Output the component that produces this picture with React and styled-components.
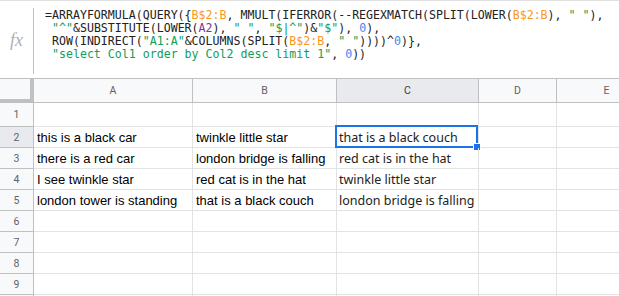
import React from 'react'
import styled, { createGlobalStyle } from 'styled-components'

const columns = [
    { key: 'A', width: 159 },
    { key: 'B', width: 144 },
    { key: 'C', width: 142 },
    { key: 'D', width: 78 },
    { key: 'E', width: 100 },
]

const rows = [
    { n: 1, height: 24, cells: ['', '', ''] },
    { n: 2, cells: ['this is a black car', 'twinkle little star', 'that is a black couch'] },
    { n: 3, cells: ['there is a red car', 'london bridge is falling', 'red cat is in the hat'] },
    { n: 4, cells: ['I see twinkle star', 'red cat is in the hat', 'twinkle little star'] },
    { n: 5, cells: ['london tower is standing', 'that is a black couch', 'london bridge is falling'] },
    { n: 6, cells: [] },
    { n: 7, cells: [] },
    { n: 8, cells: [] },
    { n: 9, cells: [] },
    { n: null, cells: [] },
]

const formula = [
    [['=ARRAYFORMULA(QUERY({'], ['B$2:B', 'ref'], [', MMULT(IFERROR(--REGEXMATCH(SPLIT(LOWER('], ['B$2:B', 'ref'], ['), '], ['" "', 'str'], ['),']],
    [[' '], ['"^"', 'str'], ['&SUBSTITUTE(LOWER('], ['A2', 'ref2'], ['), '], ['" "', 'str'], [', '], ['"$|^"', 'str'], [')&'], ['"$"', 'str'], ['), '], ['0', 'num'], ['),']],
    [[' ROW(INDIRECT('], ['"A1:A"', 'str'], ['&COLUMNS(SPLIT('], ['B$2:B', 'ref'], [', '], ['" "', 'str'], ['))))^'], ['0', 'num'], [')},']],
    [[' '], ['"select Col1 order by Col2 desc limit 1"', 'str'], [', '], ['0', 'num'], ['))']],
]

const tokenColors = {
    ref: '#f7981d',
    ref2: '#7e3794',
    str: '#0f9d58',
    num: '#4285f4',
}

function App() {
    return (
        <Page>
            <GlobalStyle />
            <FormulaBar>
                <FxBox>fx</FxBox>
                <FormulaText>
                    {formula.map((line, i) => (
                        <FormulaLine key={i}>
                            {line.map(([text, kind], j) => (
                                <Token key={j} $color={tokenColors[kind]}>{text}</Token>
                            ))}
                        </FormulaLine>
                    ))}
                </FormulaText>
            </FormulaBar>
            <Grid>
                <HeaderRow>
                    <Corner />
                    {columns.map(col => (
                        <ColHeader key={col.key} $width={col.width} $active={col.key === 'C'}>
                            {col.key}
                        </ColHeader>
                    ))}
                </HeaderRow>
                {rows.map((row, r) => (
                    <Row key={r} $height={row.height || 21}>
                        <RowHeader $active={row.n === 2}>{row.n}</RowHeader>
                        {columns.map((col, i) => (
                            <Cell key={col.key} $width={col.width} $alt={col.key === 'C'}>
                                {row.cells[i] || ''}
                                {row.n === 2 && col.key === 'C' && (
                                    <Selection>
                                        <Handle />
                                    </Selection>
                                )}
                            </Cell>
                        ))}
                    </Row>
                ))}
            </Grid>
        </Page>
    )
}

export default App

const GlobalStyle = createGlobalStyle`
    body {
        margin: 0;
        background: #fff;
        overflow: hidden;
    }
`

const Page = styled.div`
    width: 619px;
    height: 296px;
    overflow: hidden;
    background: #fff;
`

const FormulaBar = styled.div`
    display: flex;
    height: 79px;
    box-sizing: border-box;
    border-top: 1px solid #e0e0e0;
    border-bottom: 1px solid #c0c0c0;
`

const FxBox = styled.div`
    width: 33px;
    margin: 7px 0 4px;
    border-right: 1px solid #c0c0c0;
    display: flex;
    align-items: center;
    justify-content: center;
    font-family: "Liberation Serif", serif;
    font-style: italic;
    font-size: 18px;
    color: #b0b0b0;
    padding-bottom: 2px;
`

const FormulaText = styled.div`
    padding: 8px 0 0 11px;
    font-family: "DejaVu Sans Mono", monospace;
    font-size: 11.6px;
    line-height: 13px;
    color: #222;
    white-space: pre;
`

const FormulaLine = styled.div``

const Token = styled.span`
    color: ${p => p.$color || '#222'};
`

const Grid = styled.div`
    display: flex;
    flex-direction: column;
`

const HeaderRow = styled.div`
    display: flex;
    height: 23px;
    border-bottom: 1px solid #c0c0c0;
`

const Corner = styled.div`
    width: 30px;
    flex: none;
    background: #f8f9fa;
    border-right: 4px solid #c0c0c0;
    border-bottom: 3px solid #c0c0c0;
    height: 20px;
`

const ColHeader = styled.div`
    width: ${p => p.$width}px;
    flex: none;
    box-sizing: border-box;
    border-right: 1px solid #c0c0c0;
    background: ${p => (p.$active ? '#e8eaed' : '#f8f9fa')};
    display: flex;
    align-items: center;
    justify-content: center;
    font-family: Roboto, "Liberation Sans", sans-serif;
    font-size: 10.5px;
    color: ${p => (p.$active ? '#3c4043' : '#5f6368')};
`

const Row = styled.div`
    display: flex;
    height: ${p => p.$height}px;
    box-sizing: border-box;
    border-bottom: 1px solid #e2e3e3;
`

const RowHeader = styled.div`
    width: 34px;
    flex: none;
    box-sizing: border-box;
    border-right: 1px solid #c0c0c0;
    background: ${p => (p.$active ? '#e8eaed' : '#f8f9fa')};
    display: flex;
    align-items: center;
    justify-content: center;
    font-family: Roboto, "Liberation Sans", sans-serif;
    font-size: 10.5px;
    color: #5f6368;
    margin-bottom: -1px;
    border-bottom: 1px solid #c0c0c0;
`

const Cell = styled.div`
    position: relative;
    width: ${p => p.$width}px;
    flex: none;
    box-sizing: border-box;
    border-right: 1px solid #e2e3e3;
    padding: 0 ${p => (p.$alt ? '2px' : '3px')};
    display: flex;
    align-items: center;
    white-space: nowrap;
    font-family: ${p => (p.$alt ? '"Noto Sans", sans-serif' : '"Liberation Sans", Arial, sans-serif')};
    font-size: ${p => (p.$alt ? '12.5px' : '13px')};
    color: ${p => (p.$alt ? '#222' : '#000')};
`

const Selection = styled.div`
    position: absolute;
    left: -2px;
    top: -2px;
    right: 0px;
    bottom: -1px;
    border: 2px solid #1a73e8;
`

const Handle = styled.div`
    position: absolute;
    right: -5px;
    bottom: -5px;
    width: 6px;
    height: 6px;
    background: #1a73e8;
    border: 1px solid #fff;
`
